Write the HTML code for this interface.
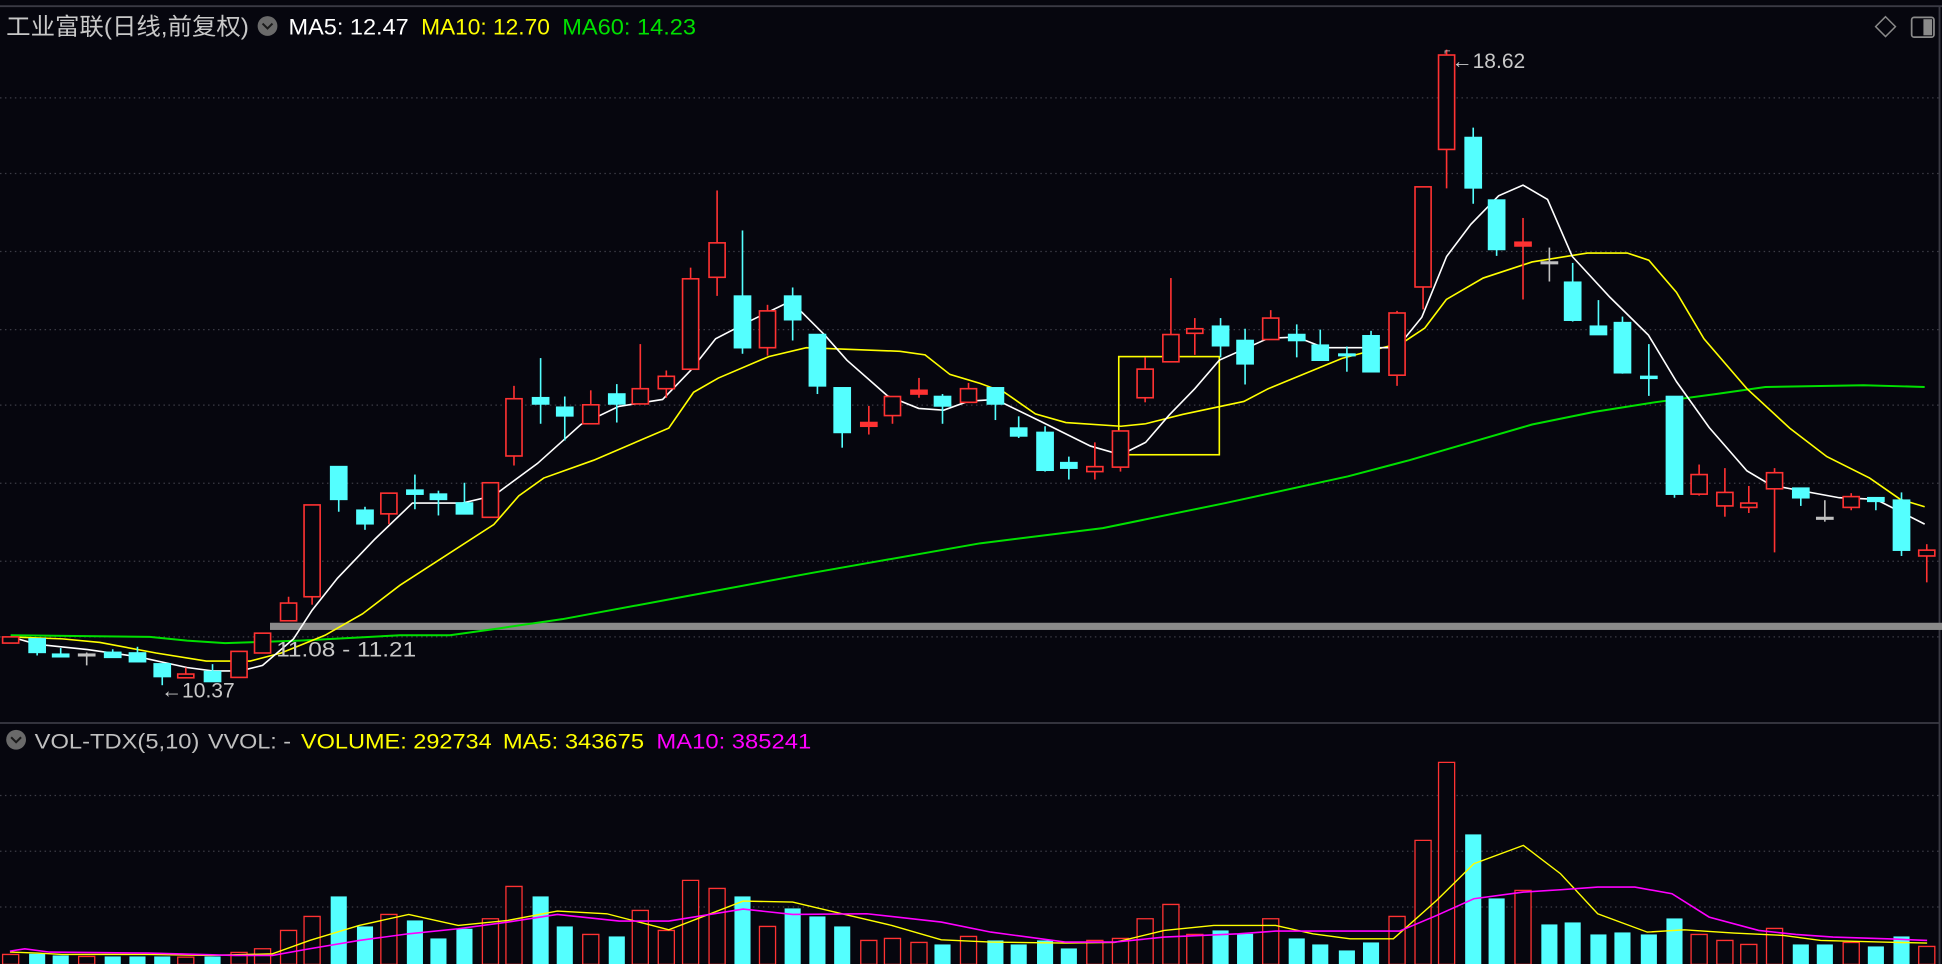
<!DOCTYPE html>
<html><head><meta charset="utf-8"><style>
html,body{margin:0;padding:0;background:#06060e;overflow:hidden}
svg{display:block}
text{font-family:"Liberation Sans","Noto Sans CJK SC",sans-serif}
</style></head><body>
<svg width="1942" height="964" viewBox="0 0 1568 778" preserveAspectRatio="none" xmlns="http://www.w3.org/2000/svg">
<rect x="0" y="0" width="1568" height="778" fill="#06060e"/>
<line x1="0" y1="5" x2="1568" y2="5" stroke="#3a3a44" stroke-width="1.5"/>
<line x1="1566" y1="5" x2="1566" y2="778" stroke="#3a3a44" stroke-width="1.5"/>
<line x1="0" y1="583.5" x2="1566" y2="583.5" stroke="#3a3a44" stroke-width="1.5"/>
<g stroke="#3c3c46" stroke-width="1" stroke-dasharray="1.2 2.8">
<line x1="0" y1="79" x2="1566" y2="79"/><line x1="0" y1="140" x2="1566" y2="140"/>
<line x1="0" y1="203" x2="1566" y2="203"/><line x1="0" y1="266" x2="1566" y2="266"/>
<line x1="0" y1="327" x2="1566" y2="327"/><line x1="0" y1="390" x2="1566" y2="390"/>
<line x1="0" y1="453" x2="1566" y2="453"/><line x1="0" y1="514" x2="1566" y2="514"/>
<line x1="0" y1="642" x2="1566" y2="642"/><line x1="0" y1="687" x2="1566" y2="687"/>
<line x1="0" y1="732" x2="1566" y2="732"/>
</g>
<text x="5" y="28" font-size="19" fill="#c8c8c8" textLength="196" lengthAdjust="spacingAndGlyphs">工业富联(日线,前复权)</text>
<circle cx="216" cy="21" r="8" fill="#6a6a6a"/>
<path d="M212 19 L216 23 L220 19" stroke="#1a1a1a" stroke-width="1.6" fill="none"/>
<text x="233" y="28" font-size="18" fill="#ffffff" textLength="97" lengthAdjust="spacingAndGlyphs">MA5: 12.47</text>
<text x="340" y="28" font-size="18" fill="#ffff00" textLength="104" lengthAdjust="spacingAndGlyphs">MA10: 12.70</text>
<text x="454" y="28" font-size="18" fill="#00e000" textLength="108" lengthAdjust="spacingAndGlyphs">MA60: 14.23</text>
<path d="M1522.4 13.5 L1530.4 21.5 L1522.4 29.5 L1514.4 21.5 Z" stroke="#8a8a8a" stroke-width="1.2" fill="none"/>
<rect x="1543.5" y="14" width="18" height="16" rx="2" stroke="#8a8a8a" stroke-width="1.4" fill="none"/>
<rect x="1553" y="15.5" width="7" height="13" fill="#8a8a8a"/>
<rect x="218" y="502.6" width="1350" height="5.8" fill="#8a8a8a"/>
<rect x="903.3" y="287.8" width="81.2" height="79.2" fill="none" stroke="#ffff00" stroke-width="1.3"/>
<polyline fill="none" stroke="#00e000" stroke-width="1.6" points="8.6,512.7 60.6,513.3 121,514 151,517 181.7,519 242,517 323,512.7 363.3,512.7 403.7,507 454,499.7 555,481 656,462.3 791.3,438.5 890.4,426.2 989.4,406 1088.5,384.4 1138,371.4 1187.6,357 1237,342.6 1286.7,332.5 1336,324.7 1385.7,318 1425.4,312.3 1504.6,310.9 1554,312.3"/>
<polyline fill="none" stroke="#ffff00" stroke-width="1.3" points="8.6,514 50.5,515.6 80.7,518.5 126,527 166.5,533.5 202,533.5 227,527 262.4,512.7 292.7,495.4 323,472.3 398.7,423.3 418.9,400.2 439,385.8 479.4,371.4 540,345.5 560,316.6 580,305.1 620.7,287.8 651,280.6 726.7,283.5 746.9,286.4 767,302.2 791.3,309.4 811,316.6 836,334 860.6,341 905,344 925,342 954.8,334.5 1004.3,324 1024,313.7 1083.6,289.2 1133,276.3 1150.4,264.7 1167.8,241.7 1197.5,224.4 1237,211.4 1281.7,204.2 1313.9,204.2 1331.3,210 1353.6,235.9 1375.8,273.4 1410.5,313.7 1445,345.5 1475,368.5 1509.6,385.8 1534.3,403 1554,409"/>
<polyline fill="none" stroke="#ffffff" stroke-width="1.3" points="8.6,514 30,520 70.6,524.2 111,530 151,538.7 171.6,541.5 194,541.5 212,537 237,515.6 252,492.5 272.5,466.6 302.8,435 333,406 373.4,406 398.7,400 434,374 469,342.6 499.6,328 535,322.4 557.6,299 577.8,273.4 605.6,259 638.4,243 666,270.5 683.8,290.7 716.6,319.5 741.8,329.6 762,331 782,323.8 804,322.4 840,340 880.5,360 905,367 925,357 944,335 964.7,313.7 984.5,290.7 1024,273 1047,272 1069,280.6 1128,280.6 1148,256 1168,207 1187.6,181 1210,158 1229.7,149.4 1249.5,161 1269.5,207 1300,240 1331,270.5 1353.6,308 1380,345 1410.5,380 1430,391.6 1485,401.7 1514.6,403 1554,423"/>
<g stroke-width="1.3">
<g stroke="#ff3232" fill="#06060e">
<line x1="8.6" y1="514" x2="8.6" y2="519"/><rect x="2.1" y="514" width="13" height="5"/>
<line x1="150" y1="538.7" x2="150" y2="547"/><rect x="143.5" y="544" width="13" height="3"/>
<line x1="193" y1="525.7" x2="193" y2="546.7"/><rect x="186.5" y="525.7" width="13" height="21"/>
<line x1="212" y1="511" x2="212" y2="527"/><rect x="205.5" y="511" width="13" height="16"/>
<line x1="233" y1="481.6" x2="233" y2="501"/><rect x="226.5" y="486.7" width="13" height="14.3"/>
<line x1="252" y1="407.5" x2="252" y2="488"/><rect x="245.5" y="407.5" width="13" height="74.1"/>
<line x1="314" y1="398" x2="314" y2="423"/><rect x="307.5" y="398" width="13" height="16.7"/>
<line x1="396" y1="389.6" x2="396" y2="417.5"/><rect x="389.5" y="389.6" width="13" height="27.9"/>
<line x1="415" y1="311.4" x2="415" y2="375.7"/><rect x="408.5" y="321.8" width="13" height="46.2"/>
<line x1="477" y1="315" x2="477" y2="342"/><rect x="470.5" y="326.7" width="13" height="15.3"/>
<line x1="517" y1="277.7" x2="517" y2="326"/><rect x="510.5" y="313.7" width="13" height="12.3"/>
<line x1="538" y1="299" x2="538" y2="321"/><rect x="531.5" y="303.7" width="13" height="10"/>
<line x1="557.6" y1="216" x2="557.6" y2="298"/><rect x="551.1" y="225" width="13" height="73"/>
<line x1="579" y1="153.7" x2="579" y2="238.8"/><rect x="572.5" y="196" width="13" height="27.8"/>
<line x1="619.7" y1="246" x2="619.7" y2="287"/><rect x="613.2" y="250.9" width="13" height="29.7"/>
<line x1="701.5" y1="327.6" x2="701.5" y2="350.7"/><rect x="695" y="341" width="13" height="3" fill="#ff3232"/>
<line x1="720.6" y1="320" x2="720.6" y2="342"/><rect x="714.1" y="320" width="13" height="15.4"/>
<line x1="742" y1="305" x2="742" y2="321"/><rect x="735.5" y="315" width="13" height="3" fill="#ff3232"/>
<line x1="782" y1="309" x2="782" y2="324.7"/><rect x="775.5" y="313.7" width="13" height="11"/>
<line x1="884" y1="357" x2="884" y2="387"/><rect x="877.5" y="376.6" width="13" height="4"/>
<line x1="904.7" y1="347.8" x2="904.7" y2="380.6"/><rect x="898.2" y="347.8" width="13" height="29.2"/>
<line x1="924.6" y1="288.4" x2="924.6" y2="324.7"/><rect x="918.1" y="297.9" width="13" height="23.1"/>
<line x1="945.4" y1="224.4" x2="945.4" y2="292"/><rect x="938.9" y="270" width="13" height="22"/>
<line x1="964.7" y1="256.7" x2="964.7" y2="286.4"/><rect x="958.2" y="265.3" width="13" height="3.7"/>
<line x1="1026" y1="250.3" x2="1026" y2="274"/><rect x="1019.5" y="256.7" width="13" height="17.3"/>
<line x1="1128" y1="250.9" x2="1128" y2="311.4"/><rect x="1121.5" y="252.6" width="13" height="50.2"/>
<line x1="1149" y1="150.8" x2="1149" y2="249.7"/><rect x="1142.5" y="150.8" width="13" height="80.8"/>
<line x1="1168" y1="40" x2="1168" y2="152"/><rect x="1161.5" y="44.4" width="13" height="76.2"/>
<line x1="1229.7" y1="175.9" x2="1229.7" y2="241.7"/><rect x="1223.2" y="195.5" width="13" height="3" fill="#ff3232"/>
<line x1="1371.9" y1="374.9" x2="1371.9" y2="400"/><rect x="1365.4" y="383" width="13" height="15.8"/>
<line x1="1392.7" y1="377.8" x2="1392.7" y2="417"/><rect x="1386.2" y="397.4" width="13" height="10.9"/>
<line x1="1412" y1="392.2" x2="1412" y2="414"/><rect x="1405.5" y="406" width="13" height="3.5"/>
<line x1="1432.8" y1="377.8" x2="1432.8" y2="445.8"/><rect x="1426.3" y="381.5" width="13" height="13"/>
<line x1="1494.7" y1="398" x2="1494.7" y2="411.8"/><rect x="1488.2" y="400.8" width="13" height="8.7"/>
<line x1="1555.7" y1="439.2" x2="1555.7" y2="470"/><rect x="1549.2" y="444" width="13" height="4.7"/>
</g>
<g stroke="#54ffff" fill="#54ffff">
<line x1="30" y1="515.6" x2="30" y2="529"/><rect x="23.5" y="515.6" width="13" height="10.9"/>
<line x1="49" y1="523" x2="49" y2="530"/><rect x="42.5" y="528" width="13" height="2"/>
<line x1="91" y1="524" x2="91" y2="530.5"/><rect x="84.5" y="526.5" width="13" height="4"/>
<line x1="111" y1="522" x2="111" y2="534"/><rect x="104.5" y="527" width="13" height="7"/>
<line x1="131" y1="535.8" x2="131" y2="553"/><rect x="124.5" y="535.8" width="13" height="10.2"/>
<line x1="171.6" y1="536" x2="171.6" y2="550"/><rect x="165.1" y="542" width="13" height="8"/>
<line x1="273.5" y1="376.6" x2="273.5" y2="413"/><rect x="267" y="376.6" width="13" height="26.4"/>
<line x1="294.7" y1="409" x2="294.7" y2="427.6"/><rect x="288.2" y="411.8" width="13" height="10.9"/>
<line x1="335" y1="383" x2="335" y2="411"/><rect x="328.5" y="395.6" width="13" height="3.2"/>
<line x1="354" y1="396" x2="354" y2="416"/><rect x="347.5" y="398.8" width="13" height="4.2"/>
<line x1="375" y1="389.6" x2="375" y2="414.7"/><rect x="368.5" y="406" width="13" height="8.7"/>
<line x1="436.5" y1="289" x2="436.5" y2="342"/><rect x="430" y="321" width="13" height="5"/>
<line x1="456" y1="320" x2="456" y2="355.5"/><rect x="449.5" y="328.7" width="13" height="6.9"/>
<line x1="498" y1="310" x2="498" y2="341"/><rect x="491.5" y="318" width="13" height="8"/>
<line x1="599.5" y1="186" x2="599.5" y2="285.5"/><rect x="593" y="239" width="13" height="41.6"/>
<line x1="640" y1="232" x2="640" y2="274.8"/><rect x="633.5" y="239" width="13" height="19"/>
<line x1="660" y1="270" x2="660" y2="318"/><rect x="653.5" y="270" width="13" height="41.4"/>
<line x1="680" y1="313" x2="680" y2="361.3"/><rect x="673.5" y="313" width="13" height="36"/>
<line x1="761" y1="318" x2="761" y2="342"/><rect x="754.5" y="320" width="13" height="7.6"/>
<line x1="803.7" y1="313" x2="803.7" y2="339"/><rect x="797.2" y="313" width="13" height="13"/>
<line x1="822.5" y1="336" x2="822.5" y2="353.5"/><rect x="816" y="345.5" width="13" height="6.3"/>
<line x1="843.8" y1="344" x2="843.8" y2="380.6"/><rect x="837.3" y="349" width="13" height="30.5"/>
<line x1="863" y1="368.5" x2="863" y2="387"/><rect x="856.5" y="373.4" width="13" height="4.4"/>
<line x1="985.5" y1="256.7" x2="985.5" y2="288.4"/><rect x="979" y="263.3" width="13" height="15.7"/>
<line x1="1005.3" y1="265.3" x2="1005.3" y2="310.3"/><rect x="998.8" y="274.8" width="13" height="18.8"/>
<line x1="1047" y1="261.8" x2="1047" y2="288.4"/><rect x="1040.5" y="270" width="13" height="4.8"/>
<line x1="1066" y1="266" x2="1066" y2="290.7"/><rect x="1059.5" y="278.6" width="13" height="12.1"/>
<line x1="1087.5" y1="279.7" x2="1087.5" y2="300"/><rect x="1081" y="285.8" width="13" height="1.2"/>
<line x1="1107" y1="267" x2="1107" y2="300"/><rect x="1100.5" y="271" width="13" height="29"/>
<line x1="1189.5" y1="103" x2="1189.5" y2="164.4"/><rect x="1183" y="111" width="13" height="40.6"/>
<line x1="1208.4" y1="161.5" x2="1208.4" y2="206.5"/><rect x="1201.9" y="161.5" width="13" height="39.8"/>
<line x1="1269.8" y1="212.2" x2="1269.8" y2="259.5"/><rect x="1263.3" y="227.8" width="13" height="30.6"/>
<line x1="1290.6" y1="242.2" x2="1290.6" y2="270"/><rect x="1284.1" y="263.3" width="13" height="6.7"/>
<line x1="1310" y1="255.5" x2="1310" y2="301.6"/><rect x="1303.5" y="260.4" width="13" height="40.4"/>
<line x1="1331.3" y1="277.7" x2="1331.3" y2="319.5"/><rect x="1324.8" y="303.8" width="13" height="1.5"/>
<line x1="1352" y1="320" x2="1352" y2="401.7"/><rect x="1345.5" y="320" width="13" height="78.8"/>
<line x1="1454" y1="394" x2="1454" y2="408.3"/><rect x="1447.5" y="394" width="13" height="7.7"/>
<line x1="1514.6" y1="401.7" x2="1514.6" y2="411.8"/><rect x="1508.1" y="401.7" width="13" height="2.9"/>
<line x1="1535.3" y1="397.4" x2="1535.3" y2="448.7"/><rect x="1528.8" y="403.7" width="13" height="40.3"/>
</g>
<g stroke="#c0c0c0" fill="#c0c0c0">
<line x1="70" y1="526.6" x2="70" y2="537"/><rect x="63.5" y="528" width="13" height="1.2"/>
<line x1="1251" y1="199.8" x2="1251" y2="227.2"/><rect x="1244.5" y="211.5" width="13" height="1.2"/>
<line x1="1473.4" y1="403.7" x2="1473.4" y2="421"/><rect x="1466.9" y="417.7" width="13" height="1.2"/>
</g>
</g>
<text x="1166" y="44" font-size="9" fill="#c8c8c8">⌐</text>
<text x="1172" y="55" font-size="17" fill="#c8c8c8">←18.62</text>
<text x="223" y="530" font-size="17" fill="#c8c8c8" textLength="113" lengthAdjust="spacingAndGlyphs">11.08 - 11.21</text>
<text x="130" y="563" font-size="17" fill="#c8c8c8">←10.37</text>
<circle cx="13" cy="597" r="8" fill="#6a6a6a"/>
<path d="M9 595 L13 599 L17 595" stroke="#1a1a1a" stroke-width="1.6" fill="none"/>
<text x="28" y="604" font-size="17" fill="#c0c0c0" textLength="133" lengthAdjust="spacingAndGlyphs">VOL-TDX(5,10)</text>
<text x="168" y="604" font-size="17" fill="#c0c0c0" textLength="67" lengthAdjust="spacingAndGlyphs">VVOL: -</text>
<text x="243" y="604" font-size="17" fill="#ffff00" textLength="154" lengthAdjust="spacingAndGlyphs">VOLUME: 292734</text>
<text x="406" y="604" font-size="17" fill="#ffff00" textLength="114" lengthAdjust="spacingAndGlyphs">MA5: 343675</text>
<text x="530" y="604" font-size="17" fill="#ff00ff" textLength="125" lengthAdjust="spacingAndGlyphs">MA10: 385241</text>
<g transform="translate(0,597.5) scale(1,0.26914)">
<g stroke="#ff3232" fill="#06060e" stroke-width="1.3">
<rect x="2.1" y="642" width="13" height="30" vector-effect="non-scaling-stroke"/>
<rect x="63.5" y="648" width="13" height="24" vector-effect="non-scaling-stroke"/>
<rect x="143.5" y="650" width="13" height="22" vector-effect="non-scaling-stroke"/>
<rect x="186.5" y="636" width="13" height="36" vector-effect="non-scaling-stroke"/>
<rect x="205.5" y="625" width="13" height="47" vector-effect="non-scaling-stroke"/>
<rect x="226.5" y="570" width="13" height="102" vector-effect="non-scaling-stroke"/>
<rect x="245.5" y="528" width="13" height="144" vector-effect="non-scaling-stroke"/>
<rect x="307.5" y="522" width="13" height="150" vector-effect="non-scaling-stroke"/>
<rect x="389.5" y="535" width="13" height="137" vector-effect="non-scaling-stroke"/>
<rect x="408.5" y="438" width="13" height="234" vector-effect="non-scaling-stroke"/>
<rect x="470.5" y="582" width="13" height="90" vector-effect="non-scaling-stroke"/>
<rect x="510.5" y="510" width="13" height="162" vector-effect="non-scaling-stroke"/>
<rect x="531.5" y="570" width="13" height="102" vector-effect="non-scaling-stroke"/>
<rect x="551.1" y="420" width="13" height="252" vector-effect="non-scaling-stroke"/>
<rect x="572.5" y="444" width="13" height="228" vector-effect="non-scaling-stroke"/>
<rect x="613.2" y="558" width="13" height="114" vector-effect="non-scaling-stroke"/>
<rect x="695" y="600" width="13" height="72" vector-effect="non-scaling-stroke"/>
<rect x="714.1" y="594" width="13" height="78" vector-effect="non-scaling-stroke"/>
<rect x="735.5" y="606" width="13" height="66" vector-effect="non-scaling-stroke"/>
<rect x="775.5" y="588" width="13" height="84" vector-effect="non-scaling-stroke"/>
<rect x="877.5" y="600" width="13" height="72" vector-effect="non-scaling-stroke"/>
<rect x="898.2" y="594" width="13" height="78" vector-effect="non-scaling-stroke"/>
<rect x="918.1" y="535" width="13" height="137" vector-effect="non-scaling-stroke"/>
<rect x="938.9" y="492" width="13" height="180" vector-effect="non-scaling-stroke"/>
<rect x="958.2" y="582" width="13" height="90" vector-effect="non-scaling-stroke"/>
<rect x="1019.5" y="535" width="13" height="137" vector-effect="non-scaling-stroke"/>
<rect x="1121.5" y="528" width="13" height="144" vector-effect="non-scaling-stroke"/>
<rect x="1142.5" y="300" width="13" height="372" vector-effect="non-scaling-stroke"/>
<rect x="1161.5" y="66" width="13" height="606" vector-effect="non-scaling-stroke"/>
<rect x="1223.2" y="450" width="13" height="222" vector-effect="non-scaling-stroke"/>
<rect x="1365.4" y="582" width="13" height="90" vector-effect="non-scaling-stroke"/>
<rect x="1386.2" y="600" width="13" height="72" vector-effect="non-scaling-stroke"/>
<rect x="1405.5" y="612" width="13" height="60" vector-effect="non-scaling-stroke"/>
<rect x="1426.3" y="564" width="13" height="108" vector-effect="non-scaling-stroke"/>
<rect x="1488.2" y="606" width="13" height="66" vector-effect="non-scaling-stroke"/>
<rect x="1549.2" y="618" width="13" height="54" vector-effect="non-scaling-stroke"/>
</g>
<g fill="#54ffff">
<rect x="23.5" y="640" width="13" height="32"/>
<rect x="42.5" y="645" width="13" height="27"/>
<rect x="84.5" y="648" width="13" height="24"/>
<rect x="104.5" y="648" width="13" height="24"/>
<rect x="124.5" y="648" width="13" height="24"/>
<rect x="165.1" y="648" width="13" height="24"/>
<rect x="267" y="468" width="13" height="204"/>
<rect x="288.2" y="558" width="13" height="114"/>
<rect x="328.5" y="540" width="13" height="132"/>
<rect x="347.5" y="594" width="13" height="78"/>
<rect x="368.5" y="565" width="13" height="107"/>
<rect x="430" y="468" width="13" height="204"/>
<rect x="449.5" y="558" width="13" height="114"/>
<rect x="491.5" y="588" width="13" height="84"/>
<rect x="593" y="468" width="13" height="204"/>
<rect x="633.5" y="504" width="13" height="168"/>
<rect x="653.5" y="528" width="13" height="144"/>
<rect x="673.5" y="558" width="13" height="114"/>
<rect x="754.5" y="612" width="13" height="60"/>
<rect x="797.2" y="600" width="13" height="72"/>
<rect x="816" y="612" width="13" height="60"/>
<rect x="837.3" y="600" width="13" height="72"/>
<rect x="856.5" y="624" width="13" height="48"/>
<rect x="979" y="570" width="13" height="102"/>
<rect x="998.8" y="580" width="13" height="92"/>
<rect x="1040.5" y="594" width="13" height="78"/>
<rect x="1059.5" y="612" width="13" height="60"/>
<rect x="1081" y="630" width="13" height="42"/>
<rect x="1100.5" y="606" width="13" height="66"/>
<rect x="1183" y="282" width="13" height="390"/>
<rect x="1201.9" y="474" width="13" height="198"/>
<rect x="1244.5" y="552" width="13" height="120"/>
<rect x="1263.3" y="546" width="13" height="126"/>
<rect x="1284.1" y="582" width="13" height="90"/>
<rect x="1303.5" y="576" width="13" height="96"/>
<rect x="1324.8" y="582" width="13" height="90"/>
<rect x="1345.5" y="534" width="13" height="138"/>
<rect x="1447.5" y="612" width="13" height="60"/>
<rect x="1466.9" y="612" width="13" height="60"/>
<rect x="1508.1" y="618" width="13" height="54"/>
<rect x="1528.8" y="588" width="13" height="84"/>
</g>
<polyline fill="none" stroke="#ffff00" stroke-width="1.4" vector-effect="non-scaling-stroke" points="8,635 30,638 50,642 120,642 170,645 220,640 250,600 290,555 330,522 370,555 410,540 450,512 490,520 540,568 600,482 640,485 680,520 720,555 760,598 800,605 860,608 900,606 940,570 980,555 1030,555 1060,580 1090,595 1125,595 1160,480 1190,370 1230,315 1260,400 1290,520 1330,575 1360,568 1400,578 1440,585 1470,600 1520,605 1556,608"/>
<polyline fill="none" stroke="#ff00ff" stroke-width="1.6" vector-effect="non-scaling-stroke" points="8,632 20,625 40,635 120,638 190,645 220,645 250,625 290,600 330,580 370,565 410,545 450,522 500,542 540,542 600,506 640,522 700,520 760,545 800,575 860,605 900,605 940,590 1000,580 1030,572 1130,572 1160,525 1190,475 1230,455 1260,448 1290,440 1320,440 1350,460 1380,530 1420,570 1450,582 1480,590 1530,596 1556,600"/>
</g>
</svg>
</body></html>
